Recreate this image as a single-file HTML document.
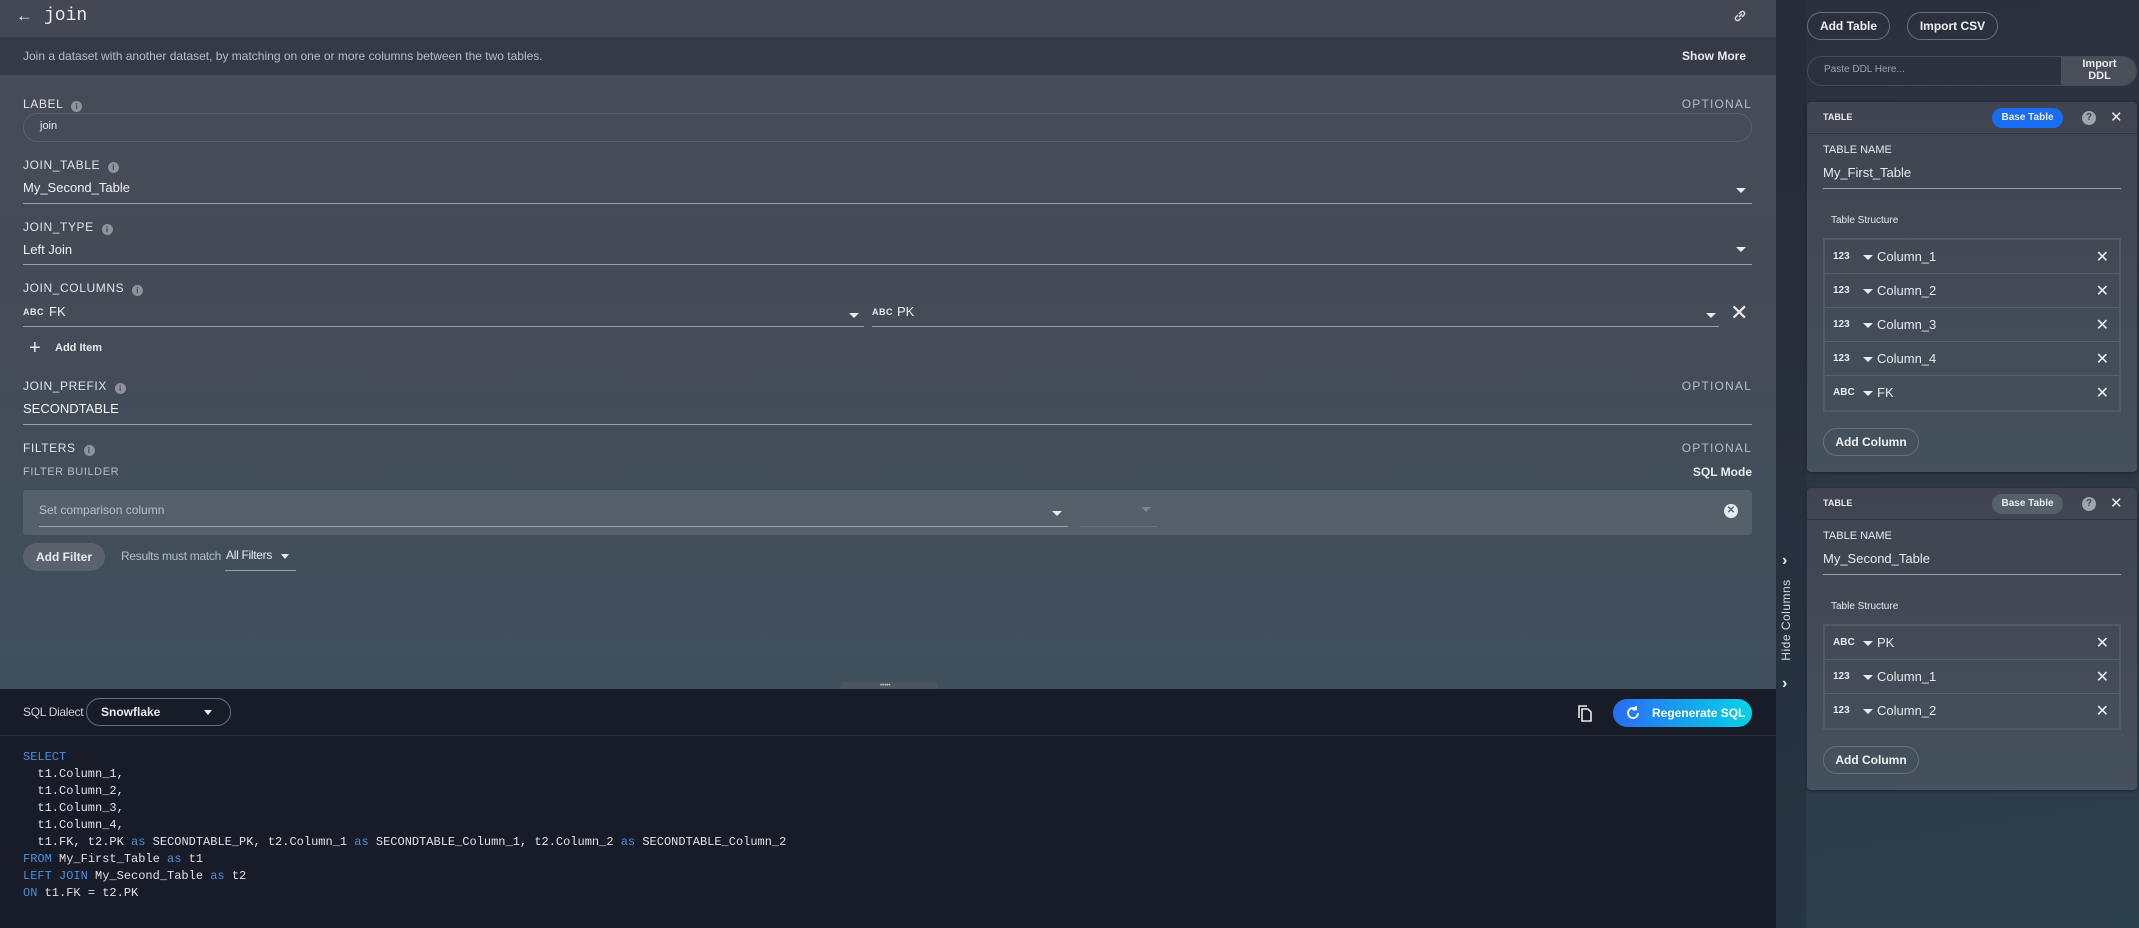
<!DOCTYPE html>
<html><head><meta charset="utf-8"><style>
*{box-sizing:border-box;margin:0;padding:0}
body{width:2139px;height:928px;overflow:hidden;font-family:"Liberation Sans",sans-serif;color:#e8eaee;position:relative;background:#2c3240}
.a{position:absolute}
#left{left:0;top:0;width:1776px;height:689px;background:linear-gradient(180deg,#474b57 0%,#444b57 40%,#3f505c 100%)}
.hdr{left:0;top:0;width:1776px;height:38px;background:#444854;border-bottom:1px solid #3a3e48}
.desc{left:0;top:38px;width:1776px;height:37px;background:#353a46}
.lbl{font-size:12px;letter-spacing:.6px;color:#e2e4e8}
.info{display:inline-block;width:11px;height:11px;border-radius:50%;background:#8d929b;vertical-align:-1px;margin-left:8px;font-size:8px;color:#444;text-align:center;line-height:11px;font-weight:bold}
.opt{font-size:12px;letter-spacing:1.2px;color:#b8bcc4}
.val{font-size:13px;color:#f0f1f3}
.ul{height:1px;background:#9aa0a8}
.arr{width:0;height:0;border-left:5px solid transparent;border-right:5px solid transparent;border-top:5px solid #e8eaee}
.abc{font-size:9px;font-weight:bold;letter-spacing:.5px;color:#e8eaee}
#sql{left:0;top:689px;width:1776px;height:239px;background:#181b28}
.code{font-family:"Liberation Mono",monospace;font-size:12px;color:#e0e2e6;line-height:17px;white-space:pre;left:23px;top:749px}
.k{color:#4a90d9}
#right{left:1776px;top:0;width:363px;height:928px;background:linear-gradient(170deg,#2b303d 0%,#2d3644 50%,#2c3f4d 100%)}
.strip{left:1776px;top:0;width:30px;height:928px;background:rgba(30,36,48,.35)}
.pill{border:1px solid #6a707a;border-radius:16px;font-size:12px;font-weight:bold;color:#f0f1f3;text-align:center}
.card{left:1807px;width:330px;border-radius:4px;background:linear-gradient(180deg,#3f4450 0%,#45515d 100%);box-shadow:0 1px 3px rgba(0,0,0,.4)}
.ch{left:0;top:0;width:330px;height:32px;border-bottom:1px solid #30343e}
.rows{left:16px;width:298px;border:2px solid #515a65}
.row{height:34px;border-bottom:1px solid #59626c;position:relative}
.row:last-child{border-bottom:none}
.row .t{position:absolute;left:8px;top:11px;font-size:10px;font-weight:bold}
.row .d{position:absolute;left:38px;top:15px}
.row .n{position:absolute;left:52px;top:9px;font-size:13px}
.row .x{position:absolute;right:10px;top:7px;font-size:16px;color:#e8eaee}
</style></head><body>
<div id="left" class="a"></div>
<div class="a hdr"></div>
<div class="a" style="left:16px;top:6px;font-size:17px">&#8592;</div>
<div class="a" style="left:44px;top:6px;font-size:18px;font-family:'Liberation Mono',monospace">join</div>
<svg class="a" style="left:1733px;top:9px" width="14" height="14" viewBox="0 0 14 14" fill="none" stroke="#ddd" stroke-width="1.5"><path d="M6 8l3-3M5 6L3 8a2 2 0 003 3l2-2M9 8l2-2a2 2 0 00-3-3L6 5"/></svg>
<div class="a desc"></div>
<div class="a" style="left:23px;top:49px;font-size:12px;color:#b8bcc4">Join a dataset with another dataset, by matching on one or more columns between the two tables.</div>
<div class="a" style="right:393px;top:49px;font-size:12px;font-weight:bold">Show More</div>

<div class="a lbl" style="left:23px;top:97px">LABEL<span class="info">i</span></div>
<div class="a opt" style="right:387px;top:97px">OPTIONAL</div>
<div class="a" style="left:23px;top:113px;width:1729px;height:29px;border:1px solid #5a606b;border-radius:15px"></div>
<div class="a" style="left:40px;top:120px;font-size:11px">join</div>

<div class="a lbl" style="left:23px;top:158px">JOIN_TABLE<span class="info">i</span></div>
<div class="a val" style="left:23px;top:180px">My_Second_Table</div>
<div class="a arr" style="left:1736px;top:188px"></div>
<div class="a ul" style="left:23px;top:203px;width:1729px"></div>

<div class="a lbl" style="left:23px;top:220px">JOIN_TYPE<span class="info">i</span></div>
<div class="a val" style="left:23px;top:242px">Left Join</div>
<div class="a arr" style="left:1736px;top:247px"></div>
<div class="a ul" style="left:23px;top:264px;width:1729px"></div>

<div class="a lbl" style="left:23px;top:281px">JOIN_COLUMNS<span class="info">i</span></div>
<div class="a abc" style="left:23px;top:307px">ABC</div>
<div class="a val" style="left:49px;top:304px">FK</div>
<div class="a arr" style="left:849px;top:313px"></div>
<div class="a ul" style="left:23px;top:326px;width:841px"></div>
<div class="a abc" style="left:872px;top:307px">ABC</div>
<div class="a val" style="left:897px;top:304px">PK</div>
<div class="a arr" style="left:1706px;top:313px"></div>
<div class="a ul" style="left:872px;top:326px;width:847px"></div>
<div class="a" style="left:1730px;top:300px;font-size:22px">&#x2715;</div>

<div class="a" style="left:29px;top:337px;font-size:20px">+</div>
<div class="a" style="left:55px;top:342px;font-size:11px;font-weight:bold">Add Item</div>

<div class="a lbl" style="left:23px;top:379px">JOIN_PREFIX<span class="info">i</span></div>
<div class="a opt" style="right:387px;top:379px">OPTIONAL</div>
<div class="a val" style="left:23px;top:401px">SECONDTABLE</div>
<div class="a ul" style="left:23px;top:424px;width:1729px"></div>

<div class="a lbl" style="left:23px;top:441px">FILTERS<span class="info">i</span></div>
<div class="a opt" style="right:387px;top:441px">OPTIONAL</div>
<div class="a lbl" style="left:23px;top:466px;font-size:11px;color:#b8bcc4">FILTER BUILDER</div>
<div class="a" style="right:387px;top:465px;font-size:12px;font-weight:bold">SQL Mode</div>
<div class="a" style="left:23px;top:490px;width:1729px;height:45px;background:#56606b;border-radius:3px"></div>
<div class="a" style="left:39px;top:503px;font-size:12px;color:#b8bec6">Set comparison column</div>
<div class="a ul" style="left:39px;top:526px;width:1029px"></div>
<div class="a arr" style="left:1052px;top:511px"></div>
<div class="a" style="left:1080px;top:526px;width:77px;height:1px;background:#6a737d"></div>
<div class="a arr" style="left:1141px;top:507px;border-top-color:#7a828c"></div>
<div class="a" style="left:1724px;top:504px;width:14px;height:14px;border-radius:50%;background:#e8eaee;color:#56606b;font-size:10px;text-align:center;line-height:14px;font-weight:bold">&#x2715;</div>
<div class="a" style="left:23px;top:543px;width:82px;height:28px;border-radius:14px;background:#5a636d;font-size:12px;font-weight:bold;text-align:center;line-height:28px">Add Filter</div>
<div class="a" style="left:121px;top:549px;font-size:12px;color:#b8bcc4;letter-spacing:-.3px">Results must match</div>
<div class="a" style="left:226px;top:548px;font-size:12px;letter-spacing:-.3px">All Filters</div>
<div class="a arr" style="left:281px;top:554px;border-left-width:4px;border-right-width:4px"></div>
<div class="a ul" style="left:225px;top:570px;width:71px"></div>
<div class="a" style="left:840px;top:682px;width:98px;height:8px;border-radius:4px 4px 0 0;background:#4b5661"></div>
<div class="a" style="left:880px;top:683px;font-size:6px;color:#ccc;letter-spacing:0">•••••</div>

<div id="sql" class="a"></div>
<div class="a" style="left:0;top:735px;width:1776px;height:1px;background:#2a2e3a"></div>
<div class="a" style="left:23px;top:705px;font-size:12px;color:#d0d3d8;letter-spacing:-.3px">SQL Dialect</div>
<div class="a" style="left:86px;top:698px;width:145px;height:28px;border:1px solid #6a707a;border-radius:14px"></div>
<div class="a" style="left:101px;top:705px;font-size:12px;font-weight:bold">Snowflake</div>
<div class="a arr" style="left:204px;top:710px;border-left-width:4px;border-right-width:4px"></div>
<svg class="a" style="left:1577px;top:704px" width="16" height="18" viewBox="0 0 16 18" fill="none" stroke="#e8eaee" stroke-width="1.6"><path d="M2 14V2h8"/><path d="M5 5h6l3 3v9H5z"/></svg>
<div class="a" style="left:1613px;top:699px;width:139px;height:28px;border-radius:14px;background:linear-gradient(90deg,#2a6cf5,#05d3e6)"></div>
<svg class="a" style="left:1625px;top:705px" width="16" height="16" viewBox="0 0 16 16" fill="none" stroke="#fff" stroke-width="1.8"><path d="M13 8a5 5 0 11-2-4"/><path d="M11 1v3.5h-3.5" /></svg>
<div class="a" style="left:1652px;top:706px;font-size:12px;font-weight:bold;color:#fff">Regenerate SQL</div>
<div class="a code"><span class="k">SELECT</span>
  t1.Column_1,
  t1.Column_2,
  t1.Column_3,
  t1.Column_4,
  t1.FK, t2.PK <span class="k">as</span> SECONDTABLE_PK, t2.Column_1 <span class="k">as</span> SECONDTABLE_Column_1, t2.Column_2 <span class="k">as</span> SECONDTABLE_Column_2
<span class="k">FROM</span> My_First_Table <span class="k">as</span> t1
<span class="k">LEFT JOIN</span> My_Second_Table <span class="k">as</span> t2
<span class="k">ON</span> t1.FK = t2.PK</div>

<div id="right" class="a"></div>
<div class="a strip"></div>
<div class="a" style="left:1782px;top:552px;font-size:16px;font-weight:bold;color:#e8eaee">&#8250;</div>
<div class="a" style="left:1782px;top:675px;font-size:16px;font-weight:bold;color:#e8eaee">&#8250;</div>
<div class="a" style="left:1736px;top:613px;width:100px;transform:rotate(-90deg);font-size:12px;color:#d8dade;text-align:center;letter-spacing:.5px;white-space:nowrap">Hide Columns</div>

<div class="a pill" style="left:1807px;top:12px;width:83px;height:28px;line-height:26px">Add Table</div>
<div class="a pill" style="left:1907px;top:12px;width:91px;height:28px;line-height:26px">Import CSV</div>
<div class="a" style="left:1807px;top:56px;width:330px;height:30px;border:1px solid #454b57;border-radius:15px;overflow:hidden">
<div class="a" style="left:253px;top:0;width:77px;height:30px;background:#4a4f5a"></div></div>
<div class="a" style="left:1824px;top:64px;font-size:10px;color:#9ea3ab">Paste DDL Here...</div>
<div class="a" style="left:2062px;top:58px;width:75px;font-size:11px;font-weight:bold;text-align:center;line-height:12px">Import<br>DDL</div>

<div class="a card" style="top:102px;height:370px">
 <div class="a ch"></div>
 <div class="a" style="left:16px;top:10px;font-size:9px;font-weight:bold">TABLE</div>
 <div class="a" style="left:185px;top:6px;width:71px;height:20px;border-radius:10px;background:#1a6cf0;font-size:10px;font-weight:bold;text-align:center;line-height:20px">Base Table</div>
 <div class="a" style="left:275px;top:9px;width:14px;height:14px;border-radius:50%;background:#a0a4ab;color:#3f4450;font-size:10px;font-weight:bold;text-align:center;line-height:14px">?</div>
 <div class="a" style="left:303px;top:6px;font-size:15px">&#x2715;</div>
 <div class="a" style="left:16px;top:42px;font-size:11px">TABLE NAME</div>
 <div class="a" style="left:16px;top:63px;font-size:13px">My_First_Table</div>
 <div class="a ul" style="left:16px;top:86px;width:298px"></div>
 <div class="a" style="left:24px;top:113px;font-size:10px">Table Structure</div>
 <div class="a rows" style="top:136px">
  <div class="row"><span class="t">123</span><span class="d arr"></span><span class="n">Column_1</span><span class="x">&#x2715;</span></div>
  <div class="row"><span class="t">123</span><span class="d arr"></span><span class="n">Column_2</span><span class="x">&#x2715;</span></div>
  <div class="row"><span class="t">123</span><span class="d arr"></span><span class="n">Column_3</span><span class="x">&#x2715;</span></div>
  <div class="row"><span class="t">123</span><span class="d arr"></span><span class="n">Column_4</span><span class="x">&#x2715;</span></div>
  <div class="row"><span class="t">ABC</span><span class="d arr"></span><span class="n">FK</span><span class="x">&#x2715;</span></div>
 </div>
 <div class="a pill" style="left:16px;top:326px;width:96px;height:28px;line-height:26px;font-weight:bold">Add Column</div>
</div>

<div class="a card" style="top:488px;height:302px">
 <div class="a ch"></div>
 <div class="a" style="left:16px;top:10px;font-size:9px;font-weight:bold">TABLE</div>
 <div class="a" style="left:185px;top:6px;width:71px;height:20px;border-radius:10px;background:#56606a;font-size:10px;font-weight:bold;text-align:center;line-height:20px">Base Table</div>
 <div class="a" style="left:275px;top:9px;width:14px;height:14px;border-radius:50%;background:#a0a4ab;color:#3f4450;font-size:10px;font-weight:bold;text-align:center;line-height:14px">?</div>
 <div class="a" style="left:303px;top:6px;font-size:15px">&#x2715;</div>
 <div class="a" style="left:16px;top:42px;font-size:11px">TABLE NAME</div>
 <div class="a" style="left:16px;top:63px;font-size:13px">My_Second_Table</div>
 <div class="a ul" style="left:16px;top:86px;width:298px"></div>
 <div class="a" style="left:24px;top:113px;font-size:10px">Table Structure</div>
 <div class="a rows" style="top:136px">
  <div class="row"><span class="t">ABC</span><span class="d arr"></span><span class="n">PK</span><span class="x">&#x2715;</span></div>
  <div class="row"><span class="t">123</span><span class="d arr"></span><span class="n">Column_1</span><span class="x">&#x2715;</span></div>
  <div class="row"><span class="t">123</span><span class="d arr"></span><span class="n">Column_2</span><span class="x">&#x2715;</span></div>
 </div>
 <div class="a pill" style="left:16px;top:258px;width:96px;height:28px;line-height:26px;font-weight:bold">Add Column</div>
</div>
</body></html>
